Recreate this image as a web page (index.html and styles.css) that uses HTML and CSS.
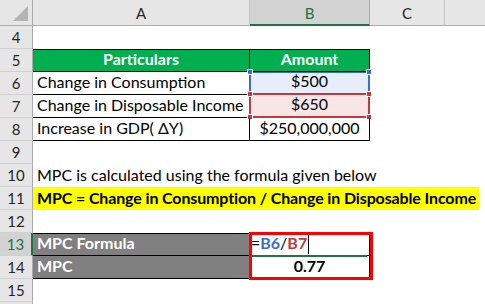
FILE: index.html
```html
<!DOCTYPE html>
<html>
<head>
<meta charset="utf-8">
<link rel="stylesheet" href="styles.css">
</head>
<body>
<div class="sheet">
  <div class="corner"><span class="tri"></span></div>
  <div class="colhead">A</div>
  <div class="colhead sel">B</div>
  <div class="colhead">C</div>
  <div class="colhead last"></div>

  <div class="rowhead">4</div>
  <div class="cell"></div><div class="cell"></div><div class="cell"></div><div class="cell"></div>

  <div class="rowhead">5</div>
  <div class="cell th tl">Particulars</div>
  <div class="cell th tr">Amount</div>
  <div class="cell"></div><div class="cell"></div>

  <div class="rowhead">6</div>
  <div class="cell td">Change in Consumption</div>
  <div class="cell td num ref-blue">$500
    <span class="h h-tl blue"></span><span class="h h-tr blue"></span>
  </div>
  <div class="cell"></div><div class="cell"></div>

  <div class="rowhead">7</div>
  <div class="cell td">Change in Disposable Income</div>
  <div class="cell td num ref-red">$650
    <span class="h h-tl red"></span><span class="h h-tr red"></span>
    <span class="h h-bl red"></span><span class="h h-br red"></span>
  </div>
  <div class="cell"></div><div class="cell"></div>

  <div class="rowhead">8</div>
  <div class="cell td">Increase in GDP( ΔY)</div>
  <div class="cell td num">$250,000,000</div>
  <div class="cell"></div><div class="cell"></div>

  <div class="rowhead">9</div>
  <div class="cell"></div><div class="cell"></div><div class="cell"></div><div class="cell"></div>

  <div class="rowhead">10</div>
  <div class="cell wide">MPC is calculated using the formula given below</div>

  <div class="rowhead">11</div>
  <div class="cell wide"><span class="highlight">MPC = Change in Consumption / Change in Disposable Income</span></div>

  <div class="rowhead">12</div>
  <div class="cell"></div><div class="cell"></div><div class="cell"></div><div class="cell"></div>

  <div class="rowhead sel">13</div>
  <div class="cell gray top">MPC Formula</div>
  <div class="cell res top formula"><span class="k">=</span><span class="rb">B6</span><span class="k">/</span><span class="rr">B7</span><span class="caret"></span><span class="active-line"></span></div>
  <div class="cell"></div><div class="cell"></div>

  <div class="rowhead">14</div>
  <div class="cell gray">MPC</div>
  <div class="cell res num bold">0.77</div>
  <div class="cell"></div><div class="cell"></div>

  <div class="rowhead">15</div>
  <div class="cell"></div><div class="cell"></div><div class="cell"></div><div class="cell"></div>

  <div class="rowhead"></div>
  <div class="cell"></div><div class="cell"></div><div class="cell"></div><div class="cell"></div>

  <div class="redbox"></div>
</div>
</body>
</html>
```

FILE: styles.css
```css
* { box-sizing: border-box; }
html, body { margin: 0; padding: 0; background: #ffffff; }
body { width: 485px; height: 304px; overflow: hidden; font-family: "Lato", "Liberation Sans", sans-serif; }

.sheet {
  position: relative;
  display: grid;
  grid-template-columns: 33px 217px 120px 75px 40px;
  grid-template-rows: 26px repeat(13, 23px);
  color: #000;
}

.corner {
  background: #e6e6e6;
  border-right: 1px solid #ababab;
  border-bottom: 1px solid #ababab;
  position: relative;
}
.tri {
  position: absolute;
  right: 4px;
  bottom: 4px;
  width: 0; height: 0;
  border-left: 15px solid transparent;
  border-bottom: 15px solid #b4b4b4;
}

.colhead {
  background: #e6e6e6;
  border-right: 1px solid #c6c6c6;
  border-bottom: 1px solid #ababab;
  display: flex;
  align-items: center;
  justify-content: center;
  font-size: 15px;
  color: #262626;
  padding-top: 1px;
}
.colhead.sel {
  background: #d2d2d2;
  color: #217346;
  border-bottom: 2px solid #217346;
  border-right-color: #ababab;
}
.colhead.last { border-right: none; }

.rowhead {
  background: #e6e6e6;
  border-right: 1px solid #ababab;
  border-bottom: 1px solid #d0d0d0;
  display: flex;
  align-items: flex-end;
  justify-content: center;
  font-size: 15px;
  color: #262626;
  padding-bottom: 2px;
}
.rowhead.sel {
  background: #d2d2d2;
  color: #217346;
  border-right: 2px solid #217346;
}

.cell {
  position: relative;
  display: flex;
  align-items: flex-end;
  font-size: 16px;
  white-space: nowrap;
  padding: 0 4px 3px;
  line-height: 18px;
}
.wide { grid-column: 2 / 6; }

.th {
  background: #00b050;
  color: #fff;
  font-weight: bold;
  justify-content: center;
  border-top: 1px solid #000;
  border-bottom: 1px solid #000;
}
.th.tl { border-right: 1px solid #000; }
.th.tr { border-right: 1px solid #000; }

.td { border-bottom: 1px solid #000; border-right: 1px solid #000; }
.num { justify-content: center; }
.bold { font-weight: bold; }

.ref-blue {
  background: #e8eef9;
  border-left: 2px solid #3c6dc5;
  border-right: 2px solid #3c6dc5;
  border-top: 1px solid #3c6dc5;
  border-bottom: 2px solid #c0393f;
  margin-left: -1px;
}
.ref-red {
  background: #f8e6e6;
  border-left: 2px solid #c0393f;
  border-right: 2px solid #c0393f;
  border-bottom: 2px solid #c0393f;
  margin-left: -1px;
}

.h {
  position: absolute;
  width: 6px;
  height: 6px;
  border: 1px solid #fff;
}
.h.blue { background: #3c6dc5; }
.h.red { background: #c0393f; }
.h-tl { left: -4px; top: -4px; }
.h-tr { right: -4px; top: -4px; }
.h-bl { left: -4px; bottom: -4px; }
.h-br { right: -4px; bottom: -4px; }

.highlight {
  display: inline-block;
  background: #ffff00;
  font-weight: bold;
  letter-spacing: -0.13px;
  width: 446px;
  margin-left: -4px;
  padding: 2px 4px 0;
  margin-bottom: -3px;
  padding-bottom: 3px;
}

.gray {
  background: #808080;
  color: #fff;
  font-weight: bold;
  border-bottom: 1px solid #000;
  border-right: 1px solid #000;
}
.top { border-top: 1px solid #000; }
.res { border-bottom: 1px solid #000; border-right: 1px solid #000; }

.formula { font-weight: bold; padding-left: 1px; }
.k { color: #000; font-weight: normal; }
.rb { color: #3c6dc5; }
.rr { color: #c0393f; }
.caret {
  display: inline-block;
  width: 1px;
  height: 21px;
  background: #000;
  margin-left: 1px;
  align-self: flex-end;
  margin-bottom: -2px;
}
.active-line {
  position: absolute;
  left: 1px;
  right: 2px;
  bottom: -2px;
  height: 2px;
  background: #217346;
}

.redbox {
  position: absolute;
  left: 249px;
  top: 232px;
  width: 124px;
  height: 48px;
  border: 3px solid #ff0000;
}
```
